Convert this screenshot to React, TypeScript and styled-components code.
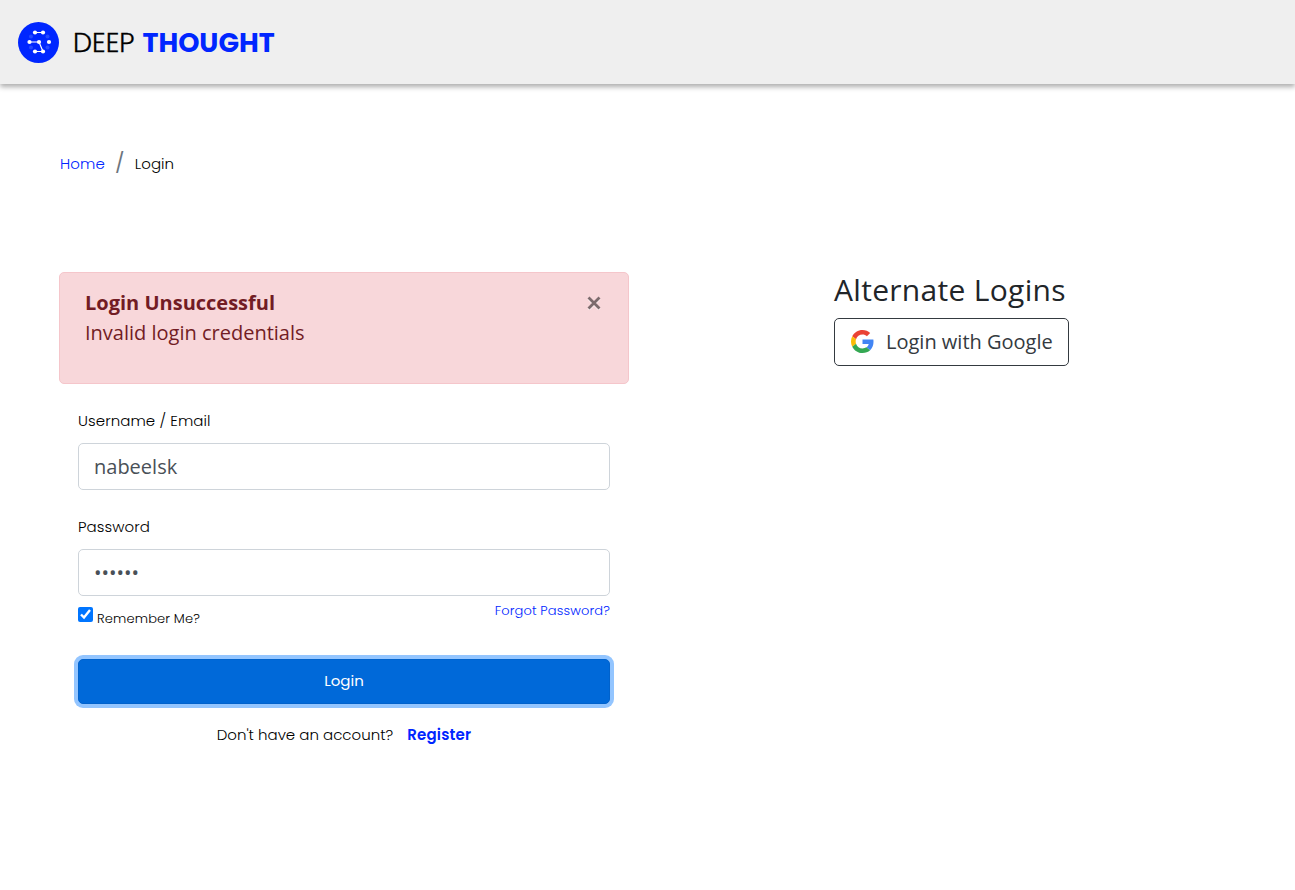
import React from "react";
import styled, { createGlobalStyle } from "styled-components";

const GlobalStyle = createGlobalStyle`
  *, *::before, *::after { box-sizing: border-box; }
  body {
    margin: 0;
    min-height: 100vh;
    background: #fff;
    color: #212529;
    font-family: "Open Sans", "Noto Sans", sans-serif;
    font-size: 20px;
    line-height: 30px;
  }
`;

const geometric = `
  font-family: Poppins, Inter, "Open Sans", sans-serif;
`;

const Header = styled.header`
  height: 84px;
  padding: 1px 0 0 18px;
  display: flex;
  align-items: center;
  gap: 14px;
  background: #efefef;
  box-shadow: 0 3px 5px 0 rgba(0, 0, 0, 0.32);
`;

const Brand = styled.div`
  ${geometric}
  display: flex;
  color: #000;
  font-size: 27px;
  line-height: 40px;
`;

const BrandWord = styled.span<{ $strong?: boolean }>`
  font-weight: ${(p) => (p.$strong ? 700 : 300)};
  color: ${(p) => (p.$strong ? "#0026ff" : "#000")};
  margin-left: ${(p) => (p.$strong ? "8px" : 0)};
  -webkit-text-stroke: ${(p) => (p.$strong ? 0 : "0.3px #000")};
`;

const Breadcrumb = styled.nav`
  ${geometric}
  display: flex;
  align-items: center;
  height: 30px;
  margin: 64px 0 0 60px;
  font-size: 15px;
`;

const Crumb = styled.span<{ $link?: boolean }>`
  color: ${(p) => (p.$link ? "#0026ff" : "#000")};
  font-weight: 300;
  padding-top: 1px;
  letter-spacing: 0.08px;
`;

const Slash = styled.span`
  ${geometric}
  color: #6c757d;
  font-size: 20px;
  font-weight: 400;
  line-height: 30px;
  width: 30px;
  text-align: center;
  padding-bottom: 1px;
`;

const Main = styled.main`
  display: flex;
  align-items: flex-start;
  margin-top: 94px;
  padding-left: 59px;
`;

const LoginColumn = styled.section`
  width: 570px;
`;

const Alert = styled.div`
  display: flex;
  justify-content: space-between;
  height: 112px;
  padding: 15px 27px 15px 25px;
  border: 1px solid #f5c6cb;
  border-radius: 5px;
  background: #f8d7da;
  color: #721c24;
`;

const AlertTitle = styled.div`
  font-weight: 700;
`;

const AlertText = styled.div`
  font-weight: 400;
`;

const CloseIcon = styled.svg`
  width: 14px;
  height: 14px;
  margin-top: 8px;
`;

const Form = styled.form`
  display: flex;
  flex-direction: column;
  padding: 22px 19px 0;
`;

const Label = styled.label`
  ${geometric}
  color: #000;
  font-size: 15px;
  font-weight: 300;
  line-height: 30px;
  letter-spacing: 0.08px;
  margin-bottom: 7px;
`;

const Input = styled.input<{ $gap?: string }>`
  height: 47px;
  width: 100%;
  padding: 0 15px;
  border: 1px solid #ced4da;
  border-radius: 5px;
  background: #fff;
  color: #495057;
  font: 400 20px "Open Sans", sans-serif;
  outline: none;
  margin-bottom: ${(p) => p.$gap || 0};
`;

const Options = styled.div`
  display: flex;
  justify-content: space-between;
  align-items: flex-start;
  height: 63px;
`;

const Remember = styled.label`
  ${geometric}
  display: flex;
  gap: 4px;
  padding-top: 11px;
  color: #000;
  font-size: 13px;
  font-weight: 300;
  line-height: 24px;
  letter-spacing: 0.15px;
`;

const Check = styled.input`
  width: 15px;
  height: 15px;
  margin: 0;
`;

const Forgot = styled.a`
  ${geometric}
  color: #0026ff;
  font-size: 13px;
  font-weight: 300;
  line-height: 30px;
  letter-spacing: 0.13px;
`;

const LoginButton = styled.button`
  ${geometric}
  height: 45px;
  padding: 0 0 2px;
  border: 1px solid #0062cc;
  border-radius: 5px;
  background: #0069d9;
  box-shadow: 0 0 0 4px #93c5ff;
  color: #fff;
  font-size: 15px;
  font-weight: 400;
`;

const RegisterRow = styled.div`
  ${geometric}
  display: flex;
  justify-content: center;
  gap: 14px;
  margin-top: 16px;
  color: #000;
  font-size: 15px;
  font-weight: 300;
  line-height: 30px;
`;

const RegisterLink = styled.a`
  color: #0026ff;
  font-weight: 600;
  letter-spacing: 0.2px;
`;

const Alternate = styled.aside`
  margin-left: 205px;
`;

const AlternateTitle = styled.h2`
  margin: 0 0 10px;
  font-size: 30px;
  font-weight: 400;
  line-height: 36px;
  letter-spacing: 0.3px;
`;

const GoogleButton = styled.button`
  display: flex;
  align-items: center;
  gap: 12px;
  width: 235px;
  height: 48px;
  padding: 0 0 1px 16px;
  border: 1px solid #343a40;
  border-radius: 5px;
  background: #fff;
  color: #343a40;
  font: 400 20px "Open Sans", sans-serif;
  white-space: nowrap;
`;

const Logo = () => (
  <svg width="41" height="41" viewBox="0 0 41 41">
    <circle cx="20.5" cy="20.5" r="20.5" fill="#0026ff" />
    <g fill="#2448ff">
      <circle cx="13" cy="14.5" r="2" />
      <circle cx="29.5" cy="14.5" r="2" />
      <circle cx="13" cy="25.5" r="2" />
      <circle cx="29.5" cy="25.5" r="2" />
    </g>
    <path d="M17 10.5H25M11.5 20H21L25 29.5H17" fill="none" stroke="#fff" strokeWidth="1.2" />
    <g fill="#fff">
      <circle cx="17" cy="10.5" r="2.1" />
      <circle cx="25" cy="10.5" r="2.1" />
      <circle cx="11.5" cy="20" r="2.1" />
      <circle cx="21" cy="20" r="2.1" />
      <circle cx="31" cy="20" r="2.1" />
      <circle cx="17" cy="29.5" r="2.1" />
      <circle cx="25" cy="29.5" r="2.1" />
    </g>
  </svg>
);

const GoogleLogo = () => (
  <svg width="23" height="23" viewBox="0 0 48 48">
    <path fill="#EA4335" d="M24 9.5c3.54 0 6.71 1.22 9.21 3.6l6.85-6.85C35.9 2.38 30.47 0 24 0 14.62 0 6.51 5.38 2.56 13.22l7.98 6.19C12.43 13.72 17.74 9.5 24 9.5z" />
    <path fill="#4285F4" d="M46.98 24.55c0-1.57-.15-3.09-.38-4.55H24v9.02h12.94c-.58 2.96-2.26 5.48-4.78 7.18l7.73 6c4.51-4.18 7.09-10.36 7.09-17.65z" />
    <path fill="#FBBC05" d="M10.53 28.59c-.48-1.45-.76-2.99-.76-4.59s.27-3.14.76-4.59l-7.98-6.19C.92 16.46 0 20.12 0 24s.92 7.54 2.56 10.78l7.97-6.19z" />
    <path fill="#34A853" d="M24 48c6.48 0 11.93-2.13 15.89-5.81l-7.73-6c-2.15 1.45-4.92 2.3-8.16 2.3-6.26 0-11.57-4.22-13.47-9.91l-7.98 6.19C6.51 42.62 14.62 48 24 48z" />
  </svg>
);

export default function App() {
  return (
    <>
      <GlobalStyle />
      <Header>
        <Logo />
        <Brand>
          <BrandWord>DEEP</BrandWord>
          <BrandWord $strong>THOUGHT</BrandWord>
        </Brand>
      </Header>
      <Breadcrumb>
        <Crumb $link>Home</Crumb>
        <Slash>/</Slash>
        <Crumb>Login</Crumb>
      </Breadcrumb>
      <Main>
        <LoginColumn>
          <Alert>
            <div>
              <AlertTitle>Login Unsuccessful</AlertTitle>
              <AlertText>Invalid login credentials</AlertText>
            </div>
            <CloseIcon viewBox="0 0 14 14">
              <path d="M1.5 2.5L12.5 13.5M12.5 2.5L1.5 13.5" stroke="#fff" strokeOpacity=".7" strokeWidth="2.8" />
              <path d="M1.5 1.5L12.5 12.5M12.5 1.5L1.5 12.5" stroke="#7c6b6d" strokeWidth="2.8" />
            </CloseIcon>
          </Alert>
          <Form onSubmit={(e) => e.preventDefault()}>
            <Label htmlFor="user">Username / Email</Label>
            <Input id="user" defaultValue="nabeelsk" $gap="22px" />
            <Label htmlFor="pass">Password</Label>
            <Input id="pass" type="password" defaultValue="secret" />
            <Options>
              <Remember>
                <Check type="checkbox" defaultChecked />
                Remember Me?
              </Remember>
              <Forgot>Forgot Password?</Forgot>
            </Options>
            <LoginButton>Login</LoginButton>
            <RegisterRow>
              <span>Don't have an account?</span>
              <RegisterLink>Register</RegisterLink>
            </RegisterRow>
          </Form>
        </LoginColumn>
        <Alternate>
          <AlternateTitle>Alternate Logins</AlternateTitle>
          <GoogleButton>
            <GoogleLogo />
            Login with Google
          </GoogleButton>
        </Alternate>
      </Main>
    </>
  );
}
